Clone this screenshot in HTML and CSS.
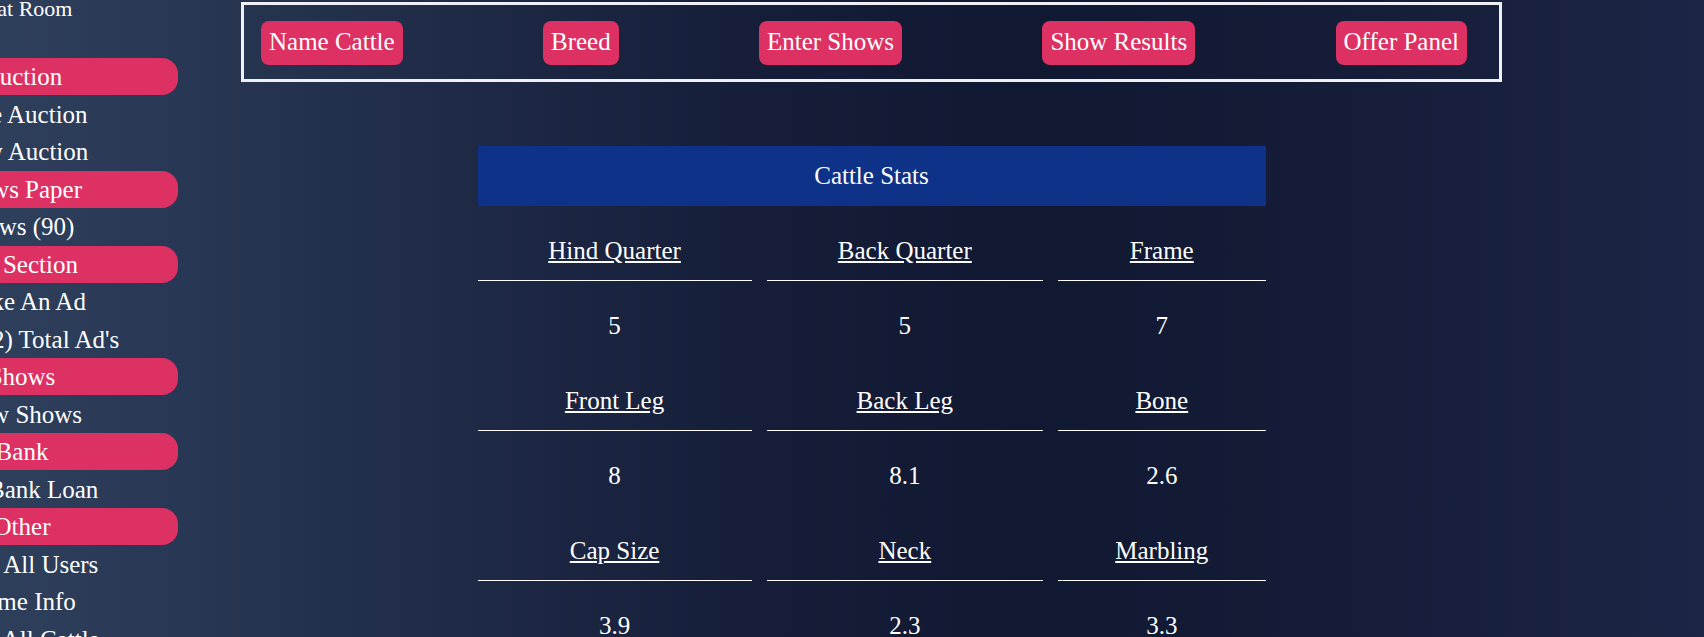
FILE: index.html
```html
<!DOCTYPE html>
<html lang="en">
<head>
<meta charset="utf-8">
<title>Cattle Stats</title>
<link rel="stylesheet" href="styles.css">
</head>
<body>
<div class="page">
  <aside class="sidebar">
    <nav class="sidebar-inner">
      <div class="chat">Chat Room</div>
      <div class="group">Auction</div>
      <a class="item" href="#">Live Auction</a>
      <a class="item" href="#">New Auction</a>
      <div class="group">News Paper</div>
      <a class="item" href="#">News (90)</a>
      <div class="group">Ad Section</div>
      <a class="item" href="#">Make An Ad</a>
      <a class="item" href="#">View (2) Total Ad's</a>
      <div class="group">Shows</div>
      <a class="item" href="#">New Shows</a>
      <div class="group">Bank</div>
      <a class="item" href="#">Get Bank Loan</a>
      <div class="group">Other</div>
      <a class="item" href="#">View All Users</a>
      <a class="item" href="#">Game Info</a>
      <a class="item" href="#">View All Cattle</a>
    </nav>
  </aside>
  <main class="main">
    <div class="actions">
      <a class="btn" href="#">Name Cattle</a>
      <a class="btn" href="#">Breed</a>
      <a class="btn" href="#">Enter Shows</a>
      <a class="btn" href="#">Show Results</a>
      <a class="btn" href="#">Offer Panel</a>
    </div>
    <table class="stats">
      <thead>
        <tr><th colspan="3" class="stats-title">Cattle Stats</th></tr>
      </thead>
      <tbody>
        <tr class="labels">
          <td><a href="#">Hind Quarter</a></td>
          <td><a href="#">Back Quarter</a></td>
          <td><a href="#">Frame</a></td>
        </tr>
        <tr class="values"><td>5</td><td>5</td><td>7</td></tr>
        <tr class="labels">
          <td><a href="#">Front Leg</a></td>
          <td><a href="#">Back Leg</a></td>
          <td><a href="#">Bone</a></td>
        </tr>
        <tr class="values"><td>8</td><td>8.1</td><td>2.6</td></tr>
        <tr class="labels">
          <td><a href="#">Cap Size</a></td>
          <td><a href="#">Neck</a></td>
          <td><a href="#">Marbling</a></td>
        </tr>
        <tr class="values"><td>3.9</td><td>2.3</td><td>3.3</td></tr>
      </tbody>
    </table>
  </main>
</div>
</body>
</html>
```
FILE: styles.css
```css
html, body {
  margin: 0;
  padding: 0;
  height: 100%;
  overflow: hidden;
}

body {
  font-family: "Liberation Serif", "Times New Roman", serif;
  color: #ffffff;
  background: linear-gradient(90deg, #2e3f5c 0%, #283753 11%, #1e2945 28%, #151d38 45%, #111832 60%, #141c37 78%, #1c2545 100%);
}

a {
  color: #ffffff;
}

.page {
  display: flex;
  align-items: flex-start;
}

.sidebar {
  width: 178px;
  flex-shrink: 0;
}

.sidebar-inner {
  width: 312px;
  margin-left: -134px;
  display: flex;
  flex-direction: column;
  text-align: center;
  font-size: 25px;
  line-height: 37.5px;
}

.chat {
  font-size: 22px;
  line-height: 33px;
  margin-top: -8px;
  margin-bottom: 33px;
}

.group {
  background: #de3163;
  border-radius: 0 16px 16px 0;
  height: 37px;
  line-height: 37px;
  margin-bottom: 0.5px;
}

.item {
  text-decoration: none;
  color: #ffffff;
}

.main {
  margin-left: 63px;
  width: 1261px;
  padding-top: 2px;
}

.actions {
  box-sizing: border-box;
  height: 80px;
  border: 3px solid #eef0f6;
  display: flex;
  align-items: center;
  justify-content: space-between;
  padding: 2px 32px 0 17px;
}

.btn {
  background: #de3163;
  border-radius: 8px;
  color: #ffffff;
  text-decoration: none;
  font-size: 25px;
  line-height: 30px;
  padding: 6px 8px 8px;
}

.stats {
  width: 818px;
  margin: 49px auto 0;
  border-collapse: separate;
  border-spacing: 15px;
  font-size: 25px;
  line-height: 29.5px;
}

.stats-title {
  background: #0f3289;
  font-weight: normal;
  padding: 15px;
  text-align: center;
}

.stats td {
  padding: 15px;
  text-align: center;
}

.labels td {
  border-bottom: 1px solid #ffffff;
}
```
